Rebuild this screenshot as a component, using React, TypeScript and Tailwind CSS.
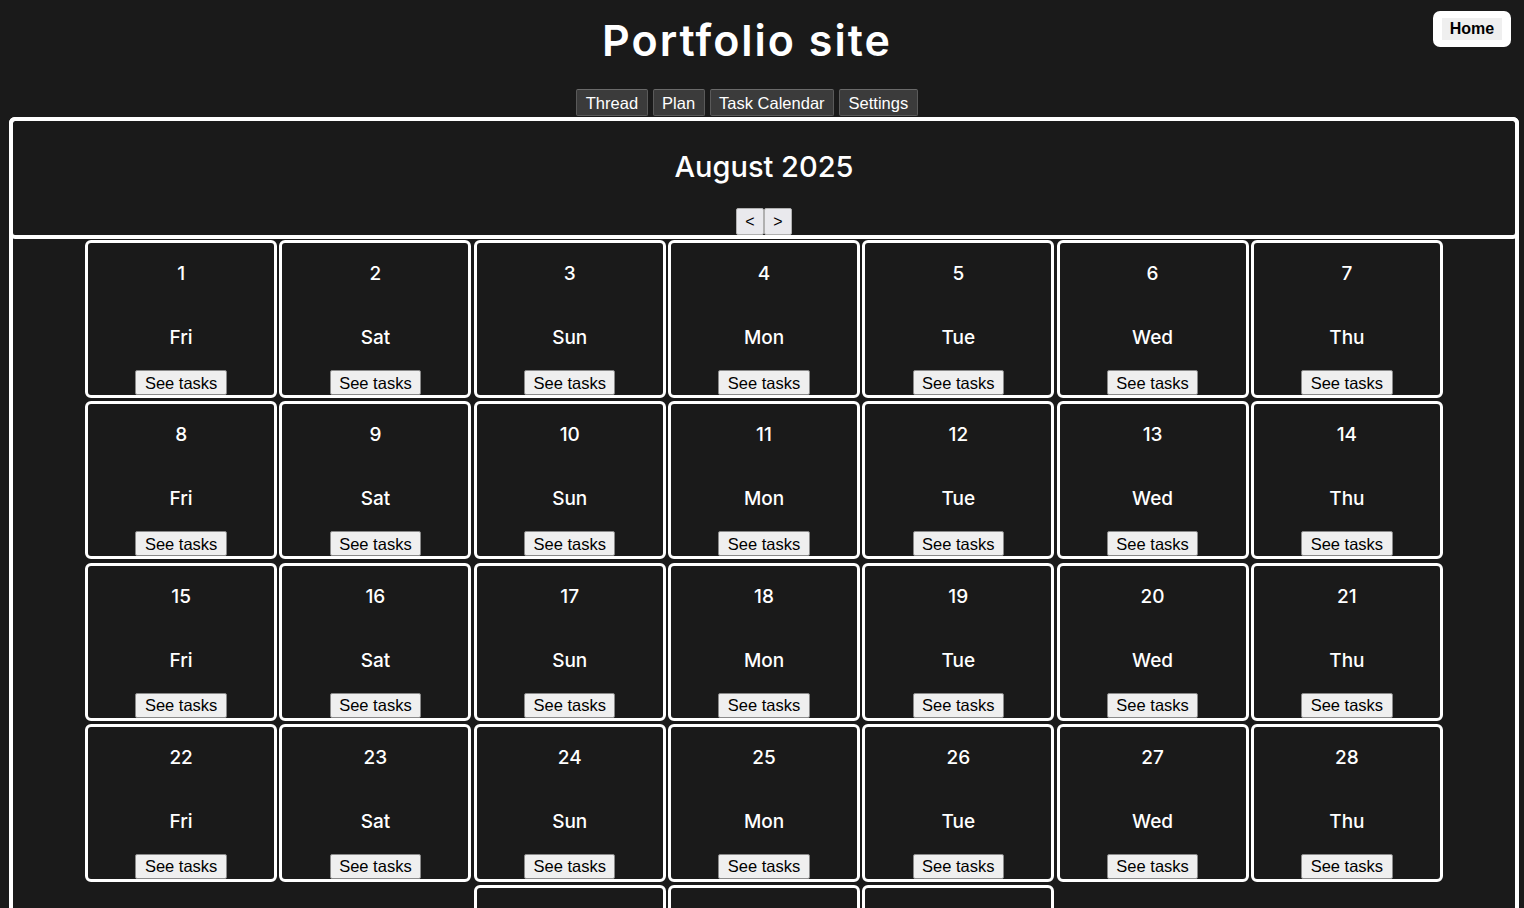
import React from 'react'

const days = ['Fri', 'Sat', 'Sun', 'Mon', 'Tue', 'Wed', 'Thu']

function DayCell({ n }: { n: number }) {
  return (
    <div className="w-[192px] h-[158px] border-[3px] border-white rounded-[6px] flex flex-col items-center">
      <div className="mt-[19px] h-[24px] leading-[24px] text-[19px] font-medium text-white font-['Inter',sans-serif]">
        {n}
      </div>
      <div className="mt-[40px] h-[24px] leading-[24px] text-[19px] font-medium text-white font-['Inter',sans-serif]">
        {days[(n - 1) % 7]}
      </div>
      <button className="mt-[20px] h-[26px] px-[8.5px] bg-[#efefef] border border-[#8a8a8a] rounded-[2px] text-black text-[16.5px] leading-[20px] font-['Liberation_Sans',Arial,sans-serif]">
        See tasks
      </button>
    </div>
  )
}

export default function App() {
  const tabs = ['Thread', 'Plan', 'Task Calendar', 'Settings']
  const nums = Array.from({ length: 31 }, (_, i) => i + 1)
  return (
    <div className="min-h-[908px] bg-[#1a1a1a] text-white relative overflow-hidden">
      <button className="absolute top-[11px] right-[13px] w-[78px] h-[36px] bg-white rounded-[7px] flex items-center justify-center">
        <span className="bg-[#efefef] px-[8px] h-[22px] leading-[22px] text-[16px] font-bold text-black font-['Liberation_Sans',Arial,sans-serif]">
          Home
        </span>
      </button>

      <div className="pr-[30px]">
        <h1 className="pt-[14px] h-[66px] text-center text-[43px] leading-[52px] font-semibold tracking-[2px] font-['Inter',sans-serif]">
          Portfolio site
        </h1>

        <div className="mt-[23px] flex justify-center gap-[5px]">
          {tabs.map(t => (
            <button
              key={t}
              className="h-[27px] px-[8.5px] bg-[#3b3b3b] border border-[#5a5a5a] border-t-[#6a6a6a] rounded-[2px] text-white text-[16.5px] leading-[20px] font-['Liberation_Sans',Arial,sans-serif]"
            >
              {t}
            </button>
          ))}
        </div>
      </div>

      <div className="mt-[1px] ml-[9px] mr-[5px] border-[4px] border-white rounded-[6px] pb-[20px]">
        <div className="-mx-[4px] -mt-[4px] h-[122px] border-[4px] border-white rounded-[6px] flex flex-col items-center">
          <div className="mt-[26px] h-[40px] leading-[40px] text-[29px] font-medium font-['Inter',sans-serif]">
            August 2025
          </div>
          <div className="mt-[21px] flex">
            <button className="w-[28px] h-[27px] bg-[#e9e9ed] border border-[#b0b0b0] rounded-[2px] text-black text-[16px] font-['Liberation_Sans',Arial,sans-serif]">&lt;</button>
            <button className="w-[28px] h-[27px] bg-[#e9e9ed] border border-[#b0b0b0] rounded-[2px] text-black text-[16px] font-['Liberation_Sans',Arial,sans-serif]">&gt;</button>
          </div>
        </div>
        <div className="mt-[1px] mx-auto w-[1358px] flex flex-wrap justify-center gap-x-[2.3px] gap-y-[3.3px]">
          {nums.map(n => (
            <DayCell key={n} n={n} />
          ))}
        </div>
      </div>
    </div>
  )
}
